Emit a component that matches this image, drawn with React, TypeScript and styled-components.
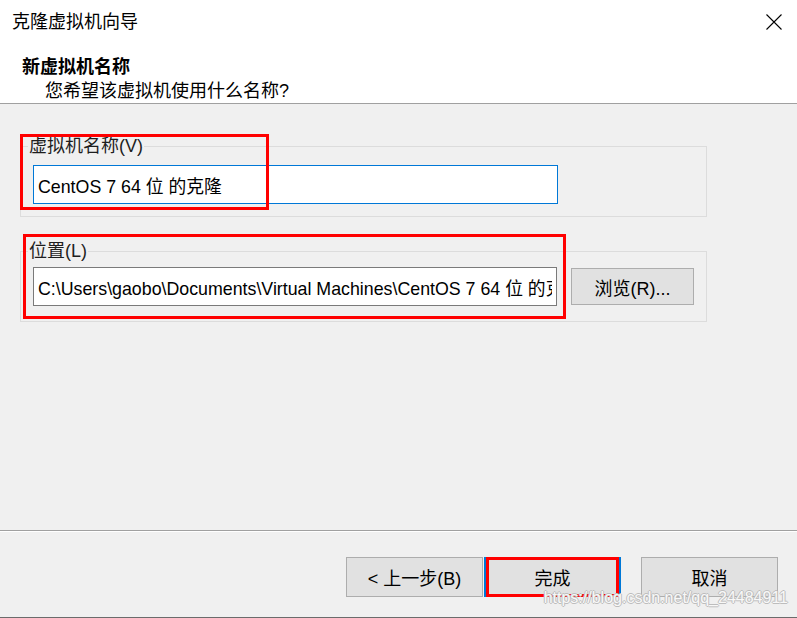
import * as React from 'react';
import styled, { createGlobalStyle } from 'styled-components';

const GlobalStyle = createGlobalStyle`
    html, body {
        margin: 0;
        padding: 0;
        overflow: hidden;
        background: #f0f0f0;
    }
    * {
        box-sizing: border-box;
    }
`;

const FONT = `"Liberation Sans", "Noto Sans CJK SC", sans-serif`;

const App = () => {
    return (
        <>
            <GlobalStyle />
            <Window>
                <Header>
                    <TitleBar>
                        <Title>克隆虚拟机向导</Title>
                        <CloseButton aria-label="关闭">
                            <svg width="16" height="16" viewBox="0 0 16 16">
                                <path d="M0.5 0.5 L15.5 15.5 M15.5 0.5 L0.5 15.5" stroke="#000" strokeWidth="1.1" fill="none" />
                            </svg>
                        </CloseButton>
                    </TitleBar>
                    <Heading>新虚拟机名称</Heading>
                    <SubHeading>您希望该虚拟机使用什么名称?</SubHeading>
                </Header>

                <Body>
                    <GroupBox>
                        <Legend>虚拟机名称(V)</Legend>
                        <Row>
                            <TextBox $focused defaultValue="CentOS 7 64 位 的克隆" />
                        </Row>
                    </GroupBox>

                    <GroupBox $top={4} $bottom={15}>
                        <Legend>位置(L)</Legend>
                        <Row>
                            <TextBox defaultValue="C:\Users\gaobo\Documents\Virtual Machines\CentOS 7 64 位 的克隆" />
                            <BrowseButton>浏览(R)...</BrowseButton>
                        </Row>
                    </GroupBox>

                    <Highlight style={{ left: 20, top: 30, width: 249, height: 76 }} />
                    <Highlight style={{ left: 23, top: 130, width: 543, height: 85 }} />
                </Body>

                <Footer>
                    <ButtonGroup>
                        <DialogButton>&lt; 上一步(B)</DialogButton>
                        <DialogButton $default>
                            完成
                            <ButtonHighlight />
                        </DialogButton>
                    </ButtonGroup>
                    <DialogButton>取消</DialogButton>
                    <Watermark>https://blog.csdn.net/qq_24484911</Watermark>
                </Footer>
            </Window>
        </>
    );
};

const Window = styled.div`
    position: relative;
    display: flex;
    flex-direction: column;
    width: 797px;
    height: 618px;
    background: #f0f0f0;
    font-family: ${FONT};
    color: #000;
    border-bottom: 1px solid #6b6b6b;
`;

const Header = styled.div`
    display: flex;
    flex-direction: column;
    height: 104px;
    background: #fff;
    border-bottom: 1px solid #a0a0a0;
`;

const TitleBar = styled.div`
    display: flex;
    align-items: center;
    justify-content: space-between;
    height: 44px;
    padding-left: 12px;
    margin-bottom: 11px;
`;

const Title = styled.div`
    font-size: 18px;
    line-height: 24px;
`;

const CloseButton = styled.div`
    display: flex;
    align-items: center;
    justify-content: center;
    width: 47px;
    height: 44px;
    padding-bottom: 1px;
`;

const Heading = styled.div`
    padding-left: 22px;
    font-size: 18px;
    font-weight: 700;
    line-height: 24px;
`;

const SubHeading = styled.div`
    padding-left: 45px;
    font-size: 18px;
    line-height: 24px;
`;

const Body = styled.div`
    position: relative;
    flex: 1;
    display: flex;
    flex-direction: column;
    gap: 22px;
    padding: 30px 90px 0 20px;
`;

const GroupBox = styled.fieldset<{ $top?: number; $bottom?: number }>`
    margin: 0;
    padding: ${p => p.$top ?? 7}px 12px ${p => p.$bottom ?? 12}px 7px;
    border: 1px solid #dcdcdc;
    min-width: 0;
`;

const Legend = styled.legend`
    padding: 0 1px;
    font-size: 18px;
    line-height: 24px;
    color: #1e1e1e;
`;

const Row = styled.div`
    display: flex;
    align-items: center;
    gap: 14px;
    padding-left: 5px;
`;

const TextBox = styled.input<{ $focused?: boolean }>`
    width: 525px;
    height: 39px;
    padding: 0 4px;
    border: 1px solid ${p => (p.$focused ? '#0078d7' : '#7a7a7a')};
    background: #fff;
    font-family: ${FONT};
    font-size: 17.8px;
    color: #000;
    outline: none;
`;

const BrowseButton = styled.button`
    width: 123px;
    height: 37px;
    border: 1px solid #adadad;
    background: #e1e1e1;
    font-family: ${FONT};
    font-size: 18px;
    color: #000;
    padding: 0;
`;

const Highlight = styled.div`
    position: absolute;
    border: 3px solid #ff0000;
    pointer-events: none;
`;

const Footer = styled.div`
    position: relative;
    display: flex;
    align-items: flex-start;
    justify-content: flex-end;
    gap: 20px;
    height: 87px;
    padding: 26px 19px 0 0;
    border-top: 1px solid #a0a0a0;
    box-shadow: inset 0 1px 0 #fff;
`;

const ButtonGroup = styled.div`
    display: flex;
    gap: 1px;
`;

const DialogButton = styled.button<{ $default?: boolean }>`
    position: relative;
    width: 137px;
    height: 40px;
    padding: 0;
    border: ${p => (p.$default ? '2px solid #0078d7' : '1px solid #adadad')};
    background: #e1e1e1;
    font-family: ${FONT};
    font-size: 18px;
    color: #000;
`;

const ButtonHighlight = styled.span`
    position: absolute;
    left: 0;
    top: -2px;
    right: 0;
    bottom: -2px;
    border: 3px solid #ff0000;
`;

const Watermark = styled.div`
    position: absolute;
    right: 9px;
    top: 58px;
    font-family: "Liberation Sans", sans-serif;
    font-size: 16px;
    line-height: 18px;
    color: #f8f8f8;
    text-shadow: 1px 0 0 #bdbdbd, -1px 0 0 #bdbdbd, 0 1px 0 #bdbdbd, 0 -1px 0 #bdbdbd;
    pointer-events: none;
`;

export default App;
